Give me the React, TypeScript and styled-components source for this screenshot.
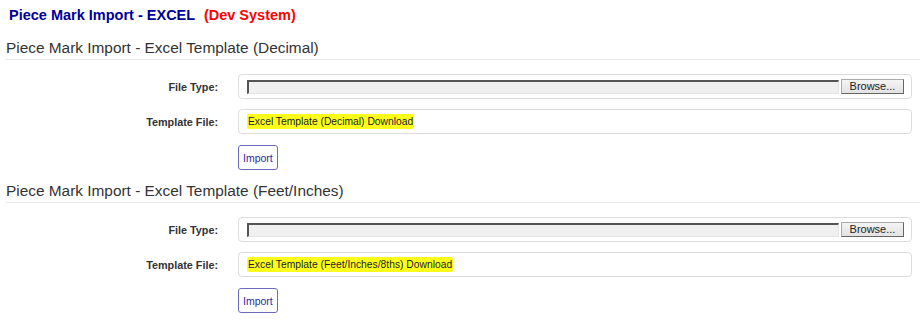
import React from 'react';
import styled, { createGlobalStyle } from 'styled-components';

const GlobalStyle = createGlobalStyle`
  body {
    margin: 0;
    background: #fff;
    font-family: 'Liberation Sans', Arial, sans-serif;
  }
`;

const sections = [
  { title: 'Piece Mark Import - Excel Template (Decimal)', link: 'Excel Template (Decimal) Download' },
  { title: 'Piece Mark Import - Excel Template (Feet/Inches)', link: 'Excel Template (Feet/Inches/8ths) Download' },
];

export default function App() {
  return (
    <Page>
      <GlobalStyle />
      <PageTitle>
        Piece Mark Import - EXCEL <DevTag>(Dev System)</DevTag>
      </PageTitle>
      {sections.map(s => (
        <Section key={s.title}>
          <SectionHeader>{s.title}</SectionHeader>
          <Form>
            <Label>File Type:</Label>
            <FieldBox>
              <FileField />
              <BrowseButton type="button">Browse...</BrowseButton>
            </FieldBox>
            <Label>Template File:</Label>
            <FieldBox>
              <TemplateLink>{s.link}</TemplateLink>
            </FieldBox>
            <span />
            <ButtonRow>
              <ImportButton type="button">Import</ImportButton>
            </ButtonRow>
          </Form>
        </Section>
      ))}
    </Page>
  );
}

const Page = styled.div`
  width: 920px;
  padding-top: 7px;
`;

const PageTitle = styled.div`
  padding-left: 9px;
  height: 16px;
  line-height: 16px;
  font-size: 14.5px;
  font-weight: bold;
  color: #000099;
  white-space: pre;
`;

const DevTag = styled.span`
  margin-left: 5px;
  color: #ff0000;
`;

const Section = styled.div`
  margin-top: 16px;

  & + & {
    margin-top: 12px;
  }
`;

const SectionHeader = styled.div`
  margin-left: 6px;
  padding-bottom: 2px;
  line-height: 18px;
  font-size: 15.4px;
  color: #333;
  border-bottom: 1px solid #e8e8e8;
`;

const Form = styled.div`
  display: grid;
  grid-template-columns: 218px 674px;
  column-gap: 20px;
  row-gap: 10px;
  align-items: center;
  margin-top: 14px;
`;

const Label = styled.div`
  text-align: right;
  font-size: 10.8px;
  font-weight: bold;
  color: #333;
`;

const FieldBox = styled.div`
  display: flex;
  align-items: center;
  height: 23px;
  padding: 0 7px 0 8px;
  border: 1px solid #dcdcdc;
  border-radius: 4px;
`;

const FileField = styled.div`
  flex: 1;
  height: 11px;
  margin-top: 1px;
  background: #f0f0f0;
  border-top: 2px solid #555;
  border-left: 2px solid #555;
  border-bottom: 1px solid #e4e4e4;
  border-right: 1px solid #e4e4e4;
`;

const BrowseButton = styled.button`
  width: 63px;
  height: 15px;
  margin-left: 2px;
  padding: 0;
  font-family: 'Liberation Sans', Arial, sans-serif;
  font-size: 11px;
  line-height: 13px;
  color: #222;
  background: linear-gradient(#f4f4f4, #e2e2e2);
  border: 1px solid #aaa;
  border-right-color: #666;
  border-bottom-color: #666;
`;

const TemplateLink = styled.span`
  padding: 1px 1px;
  line-height: 13px;
  font-size: 10.3px;
  color: #1a1a2e;
  background: #ffff1a;
  border-radius: 2px;
`;

const ButtonRow = styled.div`
  margin-top: 1px;
`;

const ImportButton = styled.button`
  height: 25px;
  padding: 0 4px;
  font-family: 'Liberation Sans', Arial, sans-serif;
  font-size: 10.5px;
  color: #2b2b9a;
  background: #fff;
  border: 1px solid #6a6ac0;
  border-radius: 3px;
`;
